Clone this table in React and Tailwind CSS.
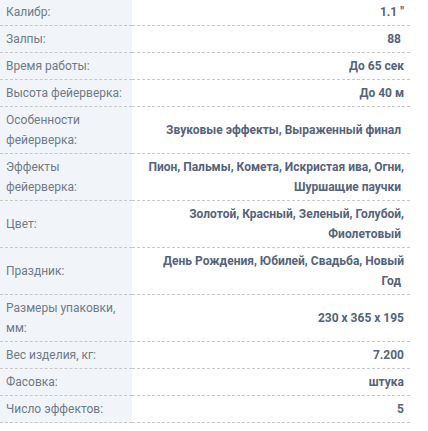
import React from 'react';

const specs = [
    ['Калибр:', '1.1 "'],
    ['Залпы:', '88\u00a0'],
    ['Время работы:', 'До 65 сек'],
    ['Высота фейерверка:', 'До 40 м'],
    ['Особенности фейерверка:', 'Звуковые эффекты, Выраженный финал\u00a0'],
    ['Эффекты фейерверка:', 'Пион, Пальмы, Комета, Искристая ива, Огни, Шуршащие паучки\u00a0'],
    ['Цвет:', 'Золотой, Красный, Зеленый, Голубой, Фиолетовый\u00a0'],
    ['Праздник:', 'День Рождения, Юбилей, Свадьба, Новый Год\u00a0'],
    ['Размеры упаковки, мм:', '230 x 365 x 195'],
    ['Вес изделия, кг:', '7.200'],
    ['Фасовка:', 'штука'],
    ['Число эффектов:', '5'],
];

const App = () => {
    return (
        <div className="bg-white min-h-[431px] overflow-hidden" style={{ fontFamily: 'Roboto, "Noto Sans", sans-serif' }}>
            <table className="w-[410px] -mt-px border-collapse text-[12px] leading-5">
                <tbody>
                    {specs.map(([label, value]) => (
                        <tr key={label} className="border-b border-dashed border-[#c8c8c8]">
                            <td className="w-[132px] bg-[#f1f5f9] pl-[6px] pr-[6px] py-[3px] align-middle text-[#6f7a87]">
                                {label}
                            </td>
                            <td className="pl-[12px] pr-[6px] py-[3px] align-middle text-right font-bold text-[#56637a]">
                                {value}
                            </td>
                        </tr>
                    ))}
                </tbody>
            </table>
        </div>
    );
};

export default App;
